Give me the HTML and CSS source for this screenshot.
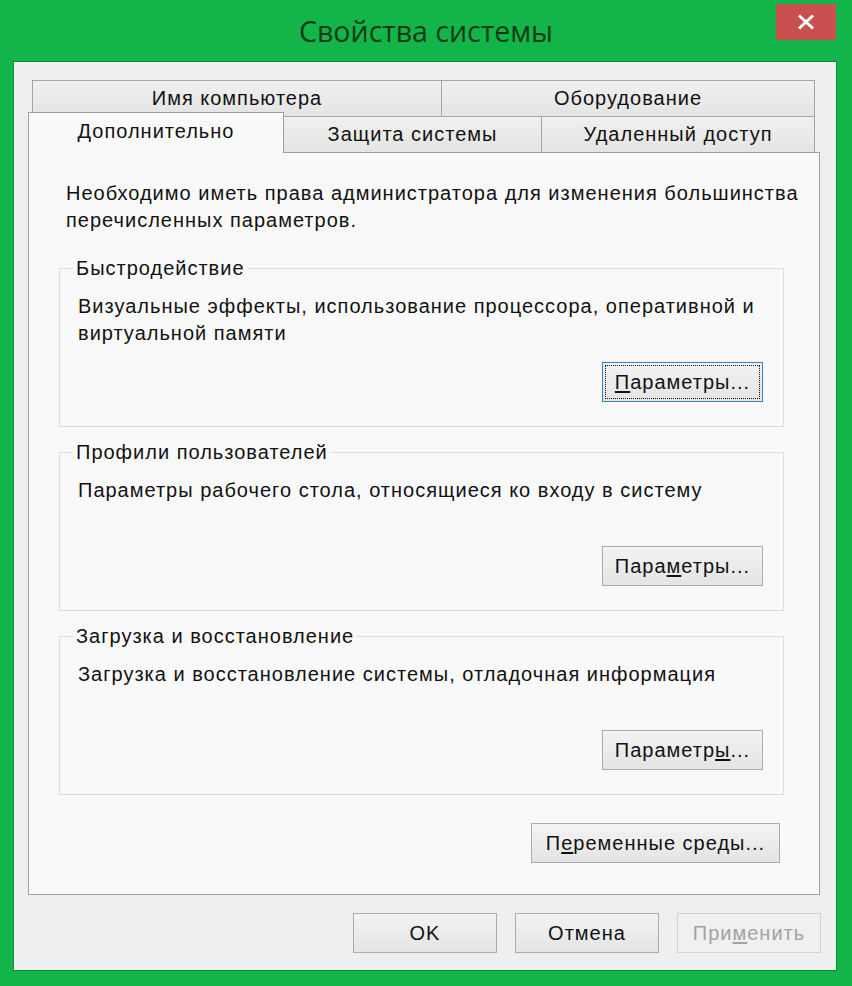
FILE: index.html
```html
<!DOCTYPE html>
<html lang="ru">
<head>
<meta charset="utf-8">
<title>Свойства системы</title>
<link rel="stylesheet" href="styles.css">
</head>
<body>
<div class="window">
  <header class="titlebar">
    <h1 class="title">Свойства системы</h1>
    <button class="close" aria-label="Закрыть">
      <svg width="18" height="16" viewBox="0 0 18 16"><path d="M2 1.5 L16 14.5 M16 1.5 L2 14.5" stroke="#fff" stroke-width="3" fill="none"/></svg>
    </button>
  </header>
  <div class="client">
    <div class="tabs">
      <div class="tabrow back">
        <div class="tab t-name">Имя компьютера</div>
        <div class="tab t-hw">Оборудование</div>
      </div>
      <div class="tabrow front">
        <div class="tab selected t-adv">Дополнительно</div>
        <div class="tab t-prot">Защита системы</div>
        <div class="tab t-remote">Удаленный доступ</div>
      </div>
    </div>
    <div class="panel">
      <p class="note">Необходимо иметь права администратора для изменения большинства<br>перечисленных параметров.</p>

      <fieldset class="group">
        <legend>Быстродействие</legend>
        <div class="group-body">
          <p class="desc">Визуальные эффекты, использование процессора, оперативной и<br>виртуальной памяти</p>
          <button class="btn btn-settings focused"><u>П</u>араметры...</button>
        </div>
      </fieldset>

      <fieldset class="group">
        <legend>Профили пользователей</legend>
        <div class="group-body">
          <p class="desc">Параметры рабочего стола, относящиеся ко входу в систему</p>
          <button class="btn btn-settings">Пара<u>м</u>етры...</button>
        </div>
      </fieldset>

      <fieldset class="group">
        <legend>Загрузка и восстановление</legend>
        <div class="group-body">
          <p class="desc">Загрузка и восстановление системы, отладочная информация</p>
          <button class="btn btn-settings">Параметр<u>ы</u>...</button>
        </div>
      </fieldset>

      <div class="env-row">
        <button class="btn btn-env">П<u>е</u>ременные среды...</button>
      </div>
    </div>
    <div class="actions">
      <button class="btn btn-dlg">OK</button>
      <button class="btn btn-dlg">Отмена</button>
      <button class="btn btn-dlg" disabled>При<u>м</u>енить</button>
    </div>
  </div>
</div>
</body>
</html>
```

FILE: styles.css
```css
html, body {
  margin: 0;
  padding: 0;
}

body {
  background: #13b54a;
  font-family: "Liberation Sans", Arial, sans-serif;
}

.window {
  width: 852px;
  height: 986px;
  background: #13b54a;
  display: flex;
  flex-direction: column;
}

.titlebar {
  height: 62px;
  display: grid;
  grid-template-columns: 1fr auto 1fr;
}

.title {
  grid-column: 2;
  margin: 0;
  font-family: "Open Sans", "Noto Sans", sans-serif;
  font-weight: 400;
  font-size: 28.5px;
  line-height: 62px;
  color: #0c3a17;
}

.close {
  grid-column: 3;
  justify-self: end;
  align-self: start;
  margin: 4px 16px 0 0;
  width: 60px;
  height: 36px;
  padding: 0;
  border: none;
  background: #c9504f;
  display: flex;
  align-items: center;
  justify-content: center;
}

.client {
  flex: 1;
  margin: 0 16px 16px 14px;
  background: #efefef;
  box-shadow: 0 0 0 1px #0c8c36;
  padding: 18px 16px 0 14px;
  display: flex;
  flex-direction: column;
}

/* Tabs */
.tabrow {
  display: flex;
}

.tabrow.back {
  margin-left: 4px;
  height: 37px;
}

.tabrow.front {
  margin-top: -5px;
  height: 40px;
  align-items: flex-end;
}

.tab {
  box-sizing: border-box;
  font-size: 20px;
  letter-spacing: 1px;
  color: #111;
  display: flex;
  align-items: center;
  justify-content: center;
  background: linear-gradient(#f0f0f0, #e4e4e4);
  border: 1px solid #a6a6a6;
}

.back .tab {
  height: 37px;
}

.back .tab + .tab {
  border-left: none;
}

.t-name { width: 410px; }
.t-hw { width: 373px; }

.front .tab {
  height: 36px;
  border-bottom: none;
}

.front .tab + .tab {
  border-left: none;
}

.t-adv { width: 256px; }
.t-prot { width: 258px; }
.t-remote { width: 273px; }

.tab.selected {
  position: relative;
  z-index: 2;
  height: 41px;
  margin-bottom: -1px;
  background: #f9f9f9;
  border-color: #a0a0a0;
  padding-bottom: 4px;
}

/* Panel */
.panel {
  position: relative;
  box-sizing: border-box;
  height: 743px;
  background: #f9f9f9;
  border: 1px solid #a0a0a0;
  padding: 27px 35px 0 30px;
}

.note, .desc {
  margin: 0;
  font-size: 20px;
  line-height: 27px;
  letter-spacing: 1px;
  color: #111;
  white-space: nowrap;
}

.note {
  padding-left: 7px;
}

.group {
  margin: 21px 0 0 0;
  padding: 0 20px 24px 13px;
  border: 1px solid #dcdcdc;
  min-width: 0;
}

.group + .group {
  margin-top: 12px;
}

.group legend {
  padding: 0 3px;
  font-size: 20px;
  line-height: 26px;
  letter-spacing: 1px;
  color: #111;
}

.group-body {
  height: 121px;
  display: flex;
  flex-direction: column;
}

.desc {
  margin: 12px 0 0 5px;
}

.btn {
  box-sizing: border-box;
  font-family: "Liberation Sans", Arial, sans-serif;
  font-size: 20px;
  letter-spacing: 1px;
  color: #111;
  background: linear-gradient(#f3f3f3, #e4e4e4);
  border: 1px solid #acacac;
  border-radius: 0;
  padding: 0;
}

.btn u {
  text-underline-offset: 2px;
}

.btn-settings {
  margin-top: auto;
  align-self: flex-end;
  width: 161px;
  height: 40px;
}

.btn.focused {
  border-color: #3c7fb1;
  outline: 1px dotted #111;
  outline-offset: -4px;
}

.env-row {
  display: flex;
  justify-content: flex-end;
  margin-top: 28px;
  padding-right: 4px;
}

.btn-env {
  width: 249px;
  height: 40px;
}

.actions {
  display: flex;
  justify-content: flex-end;
  gap: 18px;
  margin-top: 18px;
  margin-right: -1px;
}

.btn-dlg {
  width: 144px;
  height: 40px;
}

.btn-dlg:disabled {
  color: #a3a3a3;
  background: #f0f0f0;
  border-color: #d2d2d2;
}
```
